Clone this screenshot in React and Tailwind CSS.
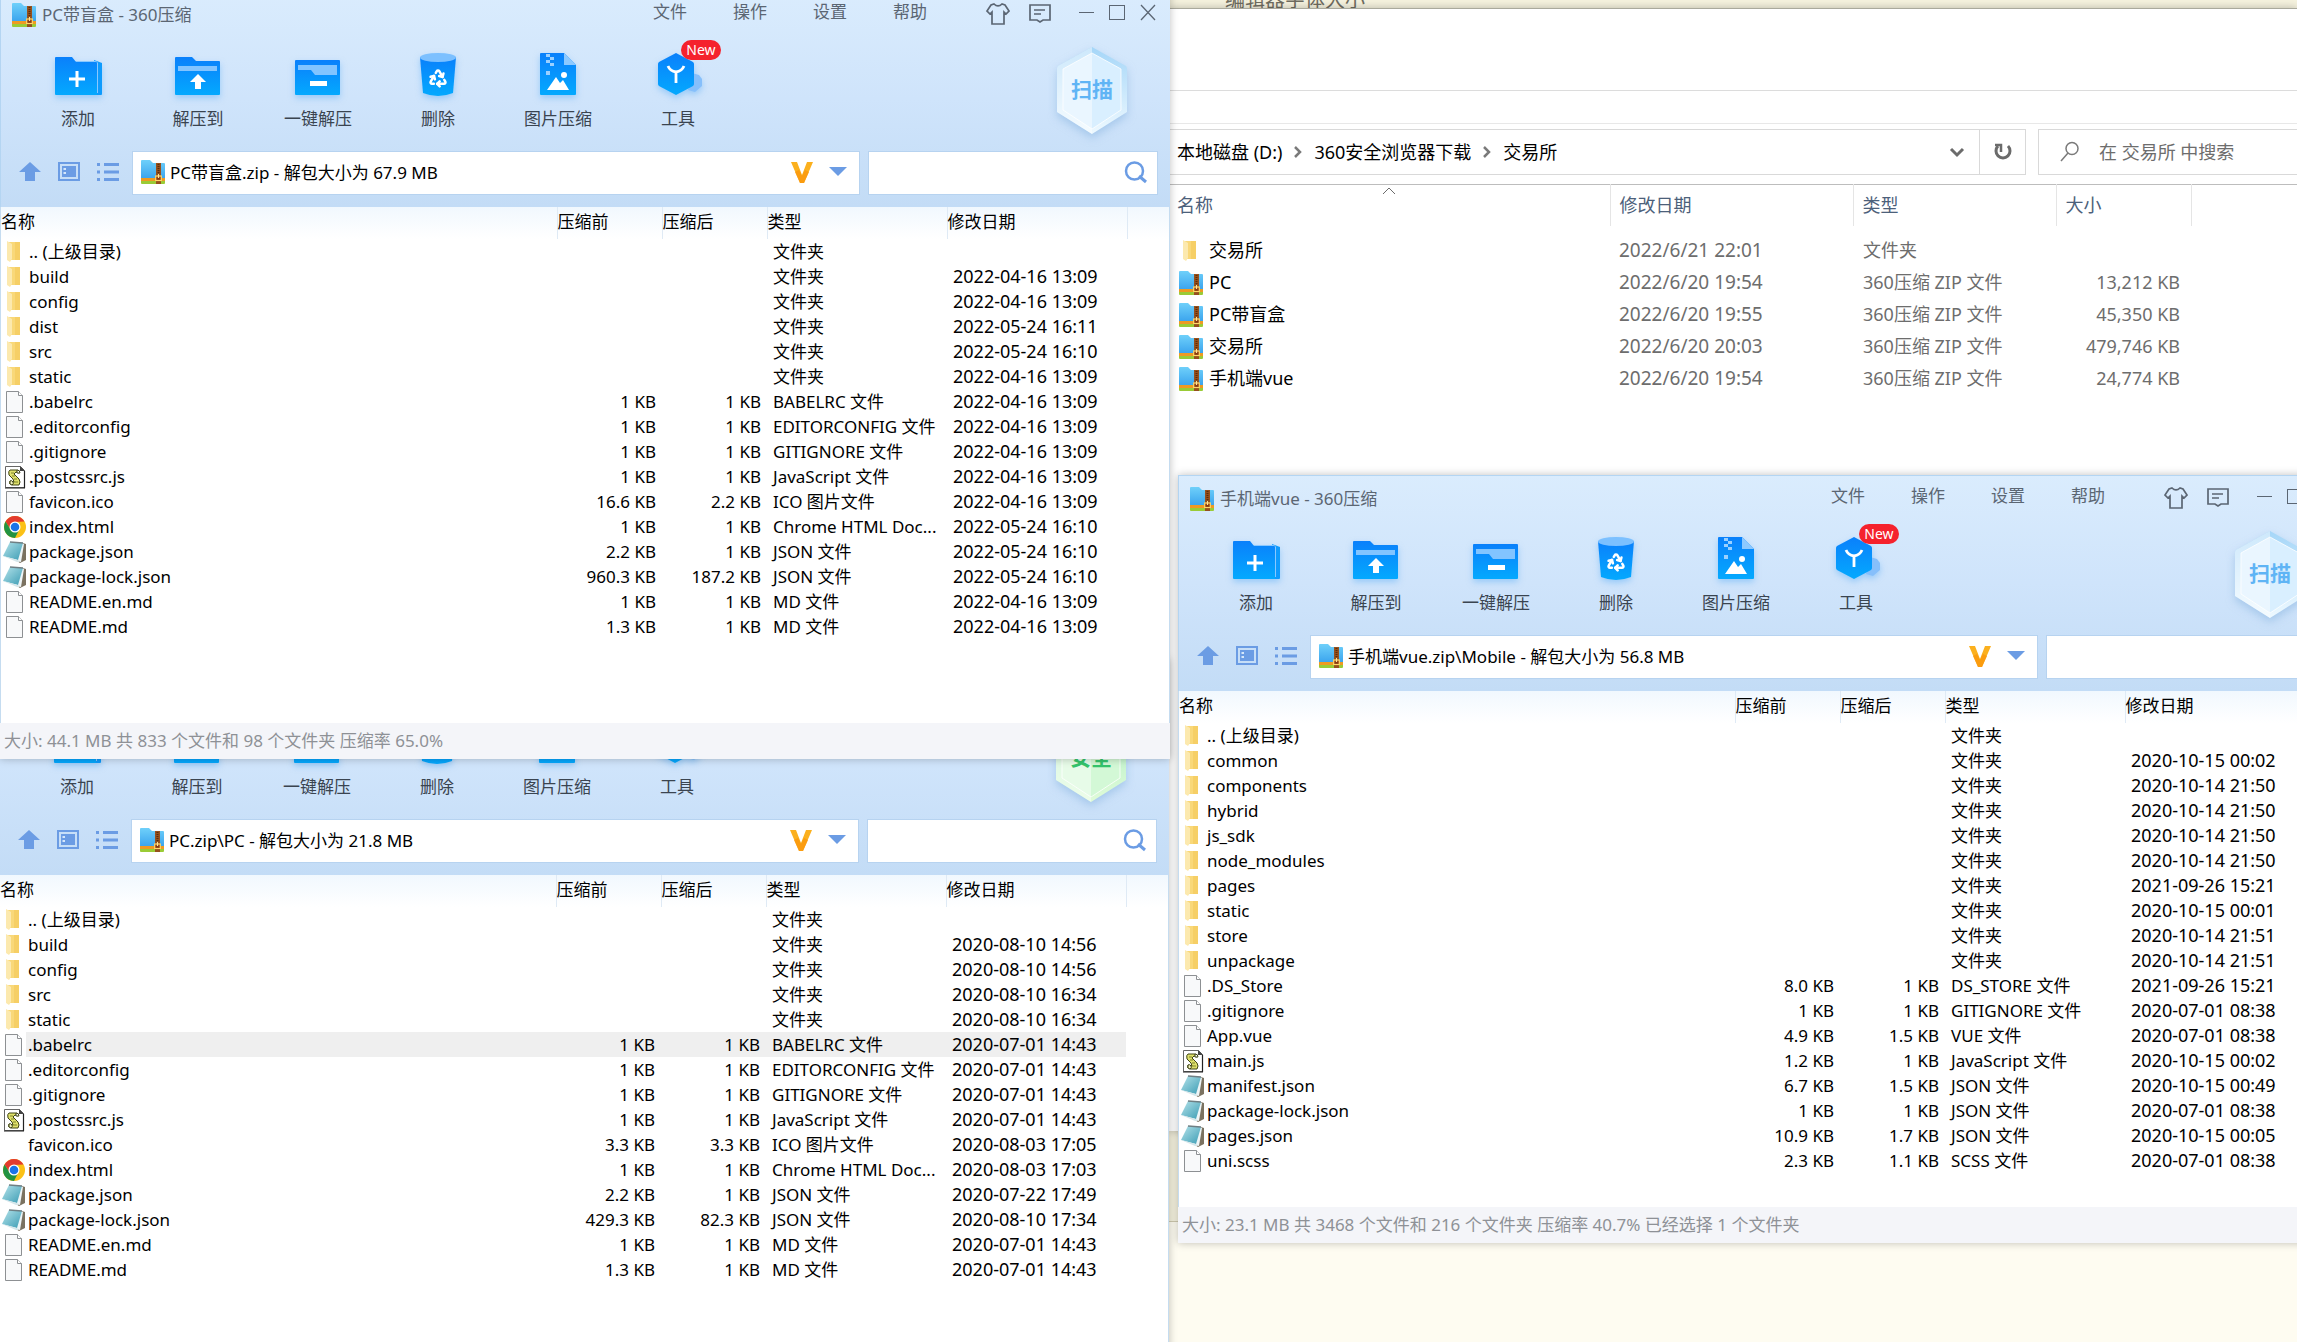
import React from "react";
import { Recycle } from "lucide-react";

/* ---------- small icons ---------- */

function ZipIcon() {
  return (
    <svg viewBox="0 0 24 24" className="size-6 shrink-0" aria-hidden="true">
      <defs>
        <linearGradient id="zipBlue" x1="0" y1="0" x2="0" y2="1">
          <stop offset="0" stopColor="#6fd0fa" />
          <stop offset="1" stopColor="#3ca5ee" />
        </linearGradient>
      </defs>
      <path d="M0 1q0-1 1-1h8l3 3h11q1 0 1 1v14H0z" fill="url(#zipBlue)" />
      <rect x="0" y="18" width="24" height="3" fill="#ee9a22" />
      <path d="M0 21h24v2q0 1-1 1H1q-1 0-1-1z" fill="#9acb36" />
      <rect x="15" y="3" width="5" height="21" fill="#96501c" />
      <path d="M17.500 4v11" stroke="#5a2c0c" strokeWidth="2" strokeDasharray="1 1" />
      <rect x="14.700" y="16" width="5.600" height="4.500" fill="#8a3a10" stroke="#ffd869" strokeWidth="1.200" />
      <path d="M17.500 14v4" stroke="#ffe39a" strokeWidth="1.200" />
    </svg>
  );
}

function FolderIcon() {
  return (
    <svg viewBox="0 0 24 24" className="size-6 shrink-0" aria-hidden="true">
      <path d="M6 2h11v18H6z" fill="#f9d879" />
      <path d="M12 2h5v18h-5z" fill="#f6cf66" />
      <path d="M4 1l5 3v15l-2 3-3-2z" fill="#fce9ae" />
    </svg>
  );
}

function FileIcon() {
  return (
    <svg viewBox="0 0 24 24" className="size-6 shrink-0" aria-hidden="true">
      <path d="M3.500 1.500h12l4 4v17h-16z" fill="#f8f9fa" stroke="#8d9093" />
      <path d="M15.500 1.500v4h4" fill="#fff" stroke="#8d9093" />
    </svg>
  );
}

function ScriptIcon() {
  return (
    <svg viewBox="0 0 24 24" className="size-6 shrink-0" aria-hidden="true">
      <path d="M2.500 1.500h15l4 4v17h-19z" fill="#fff" stroke="#666" />
      <path d="M2 23h20M21.500 6v17" stroke="#222" strokeWidth="1.200" />
      <path d="M17 1v5h5z" fill="#444" />
      <path d="M7 5h7q3 0 2 3l-3-1-2 2 5 5q2 3 0 6H9q-4-1-2-4l4 1-1-3-4-4q-1-4 1-5z" fill="#dfe06a" stroke="#3f4415" />
      <path d="M14 5q3 0 3 3h-3z" fill="#fff" stroke="#3f4415" />
      <path d="M8 8h3M9 11h3M11 14h3M11 17h4" stroke="#7f842c" />
      <path d="M7 16q2-1 3 1t-1 3q-3 0-2-4z" fill="#f4f4c0" stroke="#3f4415" />
    </svg>
  );
}

function ChromeIcon() {
  return (
    <svg viewBox="0 0 24 24" className="size-6 shrink-0" aria-hidden="true">
      <circle cx="12" cy="12" r="11" fill="#fbc116" />
      <path d="M2.500 6.500A11 11 0 0 1 21.500 6.500L12 7 7.700 14.500z" fill="#e33b2e" />
      <path d="M2.500 6.500A11 11 0 0 0 12 23l4.300-8.500-4.300 2.500-4.300-2.500z" fill="#229342" />
      <circle cx="12" cy="12" r="5.500" fill="#fff" />
      <circle cx="12" cy="12" r="4.300" fill="#1a73e8" />
    </svg>
  );
}

function NoteIcon() {
  return (
    <svg viewBox="0 0 24 24" className="size-6 shrink-0" aria-hidden="true">
      <defs>
        <linearGradient id="note" x1="0" y1="0" x2="1" y2="1">
          <stop offset="0" stopColor="#b5e3ea" />
          <stop offset="1" stopColor="#3b9cb4" />
        </linearGradient>
      </defs>
      <path d="M20 3l3 1v16l-6 3-3-2z" fill="#7b7260" />
      <path d="M19 3l2 1-3 18-4-1z" fill="#eef5f7" />
      <path d="M7 2l13 1-5 17L0 16z" fill="url(#note)" />
      <path d="M7 2l13 1" stroke="#6f7f84" strokeWidth="1.500" />
      <path d="M0 16l15 4 2 2-3 0z" fill="#d5e6ea" />
    </svg>
  );
}

const fileIcons = {
  zip: ZipIcon,
  folder: FolderIcon,
  file: FileIcon,
  script: ScriptIcon,
  chrome: ChromeIcon,
  note: NoteIcon,
};

/* ---------- toolbar icons ---------- */

function ToolGradient() {
  return (
    <svg className="absolute size-0" aria-hidden="true">
      <defs>
        <linearGradient id="tool" x1="0" y1="0" x2="0" y2="1">
          <stop offset="0" stopColor="#0a80fb" />
          <stop offset="1" stopColor="#04a9fe" />
        </linearGradient>
      </defs>
    </svg>
  );
}

const toolArt = {
  add: (
    <>
      <path d="M40 11l8 3v31q0 1-1 1h-5z" fill="#0e9bfd" />
      <path d="M21 12h20q2 0 3 2v30h-3V14H20z" fill="#8ac8ff" />
      <path d="M1 9q0-1 1-1h16l4 5h20q1 0 1 1v32H2q-1 0-1-1z" fill="url(#tool)" />
      <path d="M23 22v16M15 30h16" stroke="#fff" strokeWidth="3" />
    </>
  ),
  extract: (
    <>
      <path d="M1 9q0-1 1-1h16l4 4h23q1 0 1 1v32q0 1-1 1H2q-1 0-1-1z" fill="url(#tool)" />
      <path d="M4 17h39v5H4z" fill="#82c4ff" />
      <path d="M24 25l8 8h-5v7h-6v-7h-5z" fill="#fff" />
    </>
  ),
  quick: (
    <>
      <path d="M1 12q0-1 1-1h43q1 0 1 1v33q0 1-1 1H2q-1 0-1-1z" fill="url(#tool)" />
      <path d="M4 16h39v10H21l-4-5H4z" fill="#82c4ff" />
      <path d="M16 32h17v5H16z" fill="#fff" />
    </>
  ),
  remove: (
    <>
      <path d="M6 8h36l-3 36q-15 6-30 0z" fill="url(#tool)" />
      <ellipse cx="24" cy="8.500" rx="18" ry="4.500" fill="#7cc0ff" />
    </>
  ),
  picture: (
    <>
      <path d="M6 5q0-1 1-1h23l12 12v29q0 1-1 1H7q-1 0-1-1z" fill="url(#tool)" />
      <path d="M30 4l12 12H30z" fill="#8cc9ff" />
      <path d="M12 5h4v3h-4zM16 8h4v3h-4zM12 11h4v3h-4zM16 14h4v3h-4zM12 22h4v4h-4z" fill="#9bd0ff" />
      <circle cx="30" cy="26" r="3" fill="#fff" />
      <path d="M13 41l9-13 4 6 3-3 6 10z" fill="#fff" />
    </>
  ),
  tools: (
    <>
      <path d="M38 24l7 2 3 4v7l-7 6-7-2z" fill="#86bffb" />
      <path d="M22 4l17 9q1 1 1 2v20q0 1-1 2l-17 9L5 37q-1-1-1-2V15q0-1 1-2z" fill="url(#tool)" />
      <path d="M14 17q2 5 8 6 6-1 8-6M22 23v11" fill="none" stroke="#fff" strokeWidth="2.800" />
    </>
  ),
};

const tools = [
  ["add", "添加"],
  ["extract", "解压到"],
  ["quick", "一键解压"],
  ["remove", "删除"],
  ["picture", "图片压缩"],
  ["tools", "工具"],
];

function ToolButton({ kind, label }) {
  return (
    <button type="button" className="flex w-[120px] flex-col items-center gap-2.5 pt-2.5">
      <span className="relative block size-12">
        <svg viewBox="0 0 48 48" className="size-12 drop-shadow-[0_3px_3px_#5fb0f580]" aria-hidden="true">
          {toolArt[kind]}
        </svg>
        {kind === "remove" && (
          <Recycle className="absolute top-[19px] left-[14px] size-5 text-white" strokeWidth={3} />
        )}
        {kind === "tools" && (
          <span className="absolute -top-[9px] left-[27px] w-10 rounded-full bg-[#f5222d] text-center text-[14px] leading-5 text-white">
            New
          </span>
        )}
      </span>
      <span className="leading-6 whitespace-nowrap text-[#3a4450]">{label}</span>
    </button>
  );
}

function ShieldBadge({ label, safe }) {
  const id = safe ? "shieldSafe" : "shieldScan";
  return (
    <button type="button" className="relative mt-2 mr-[43px] h-[88px] w-[70px]">
      <svg viewBox="0 0 70 88" className="h-[88px] w-[70px] drop-shadow-[0_4px_4px_#7faedb80]" aria-hidden="true">
        <defs>
          <linearGradient id={id} x1="0" y1="0" x2="0" y2="1">
            <stop offset="0" stopColor={safe ? "#a9ecc4" : "#a5d6f8"} />
            <stop offset="1" stopColor={safe ? "#e0fbd8" : "#eef9ff"} />
          </linearGradient>
        </defs>
        <path d="M35 0l34 19q1 1 1 3v43L35 87 0 65V22q0-2 1-3z" fill={`url(#${id})`} />
        <path d="M35 6l29 16v41L35 82 6 63V22z" fill={safe ? "#d3f8d6" : "#d9efff"} stroke="#fff" strokeOpacity="0.800" />
        <path d="M35 0v87L0 65V22q0-2 1-3z" fill="#fff" fillOpacity="0.450" />
      </svg>
      <span
        className={
          safe
            ? "absolute inset-0 text-center text-[21px] leading-[84px] font-bold text-[#35c46c]"
            : "absolute inset-0 text-center text-[21px] leading-[84px] font-bold text-[#5fb4f5]"
        }
      >
        {label}
      </span>
    </button>
  );
}

/* ---------- archiver window ---------- */

function TitleBar({ title }) {
  return (
    <div className="flex h-12 items-start justify-between">
      <h2 className="flex items-center gap-1.5 pt-3 pl-3 leading-6 text-[#5b6673]">
        <ZipIcon />
        {title}
      </h2>
      <div className="flex items-start pt-[9px] pr-2.5 text-[#5b6673]">
        <nav className="flex leading-6">
          {["文件", "操作", "设置", "帮助"].map((m) => (
            <button key={m} type="button" className="w-20">
              {m}
            </button>
          ))}
        </nav>
        <button type="button" aria-label="皮肤" className="mt-px ml-9 size-6">
          <svg viewBox="0 0 24 24" fill="none" stroke="currentColor" strokeWidth="1.700">
            <path d="M8 3q4 4 8 0l3 1 4 6-3 3-2-2v12H6V11l-2 2-3-3 4-6z" />
          </svg>
        </button>
        <button type="button" aria-label="反馈" className="mt-px ml-[18px] size-6">
          <svg viewBox="0 0 24 24" fill="none" stroke="currentColor" strokeWidth="1.700">
            <path d="M2 4h20v15h-7l-3 2-3-2H2z" />
            <path d="M6 9h11M6 13h7" />
          </svg>
        </button>
        <button type="button" aria-label="最小化" className="ml-[22px] size-6">
          <svg viewBox="0 0 24 24" fill="none" stroke="currentColor">
            <path d="M5 12.500h15" />
          </svg>
        </button>
        <button type="button" aria-label="最大化" className="ml-[7px] size-6">
          <svg viewBox="0 0 24 24" fill="none" stroke="currentColor">
            <rect x="4.500" y="5.500" width="15" height="14" />
          </svg>
        </button>
        <button type="button" aria-label="关闭" className="ml-[7px] size-6">
          <svg viewBox="0 0 24 24" fill="none" stroke="currentColor" strokeWidth="1.300">
            <path d="M5 5l14 15M19 5L5 20" />
          </svg>
        </button>
      </div>
    </div>
  );
}

function AddressRow({ path }) {
  return (
    <div className="flex h-14 items-start pr-3 pb-3 text-[#6b9ce4]">
      <div className="flex h-[42px] w-[132px] shrink-0 items-center gap-[15px] pl-[18px]">
        <button type="button" aria-label="上一级" className="size-6">
          <svg viewBox="0 0 24 24" fill="currentColor">
            <path d="M12 2l11 10h-6v9H7v-9H1z" />
          </svg>
        </button>
        <button type="button" aria-label="视图" className="size-6">
          <svg viewBox="0 0 24 24">
            <rect x="2" y="3" width="20" height="17" fill="none" stroke="currentColor" strokeWidth="2" />
            <path d="M5 6h14v11H5z" fill="currentColor" />
            <path d="M6.500 8h2.500v2h-2.500zM6.500 12h2.500v2h-2.500z" fill="#d5e7fb" />
          </svg>
        </button>
        <button type="button" aria-label="列表" className="size-6">
          <svg viewBox="0 0 24 24" fill="none" stroke="currentColor" strokeWidth="3">
            <path d="M1 4.500h3M1 12h3M1 19.500h3M8 4.500h15M8 12h15M8 19.500h15" />
          </svg>
        </button>
      </div>
      <div className="flex h-11 min-w-0 flex-1 items-center border border-[#b7d3f0] bg-white pr-[9px] pb-0.5 pl-2">
        <ZipIcon />
        <input
          aria-label="压缩包路径"
          defaultValue={path}
          className="h-10 min-w-0 flex-1 bg-transparent pb-0.5 pl-[5px] text-black outline-none"
        />
        <svg viewBox="0 0 24 24" className="size-6" aria-hidden="true">
          <path d="M1 2h6l5 13 5-13h6L14 23h-4z" fill="#fbb01e" />
          <path d="M5 12l5 11h4l5-11-4-2-3 6-3-6z" fill="#fb970b" fillOpacity="0.800" />
        </svg>
        <button type="button" aria-label="历史路径" className="ml-3 size-6">
          <svg viewBox="0 0 24 24" fill="currentColor">
            <path d="M3 7h18l-9 9z" />
          </svg>
        </button>
      </div>
      <div className="ml-2 flex h-11 w-[290px] shrink-0 items-center border border-[#b7d3f0] bg-white pr-[9px] pb-0.5">
        <input type="search" aria-label="搜索" className="h-10 min-w-0 flex-1 bg-transparent px-2 text-black outline-none" />
        <button type="button" aria-label="开始搜索" className="size-6">
          <svg viewBox="0 0 24 24" fill="none" stroke="currentColor" strokeWidth="2.500">
            <circle cx="10.500" cy="11" r="8.500" />
            <path d="M15 16l7 6" strokeWidth="3" />
          </svg>
        </button>
      </div>
    </div>
  );
}

function ArchiveTable({ rows }) {
  return (
    <table className="w-full table-fixed border-collapse text-black">
      <colgroup>
        <col />
        <col className="w-[105px]" />
        <col className="w-[105px]" />
        <col className="w-[180px]" />
        <col className="w-[180px]" />
        <col className="w-[42px]" />
      </colgroup>
      <thead>
        <tr className="h-8 bg-linear-to-b from-[#f1f8fe] to-white text-left leading-6">
          <th className="p-0 pb-0.5 font-normal">名称</th>
          {["压缩前", "压缩后", "类型", "修改日期"].map((h) => (
            <th key={h} className="border-l border-[#dfeaf5] p-0 pb-0.5 font-normal">
              {h}
            </th>
          ))}
          <th className="border-l border-[#dfeaf5] p-0" aria-label="空白列" />
        </tr>
      </thead>
      <tbody>
        {rows.map(([icon, name, before, after, type, date, active]) => {
          const Icon = fileIcons[icon];
          const fill = active ? "bg-[#efefef]" : "";
          return (
            <tr key={name} className="h-[25px] leading-[25px] whitespace-nowrap">
              <td className="p-0">
                <div className="flex h-[25px] items-center">
                  <span className="flex w-[26px] shrink-0 justify-end">{Icon && <Icon />}</span>
                  <span className={`h-[25px] flex-1 pl-0.5 ${fill}`}>{name}</span>
                </div>
              </td>
              <td className={`p-0 pr-1.5 text-right ${fill}`}>{before}</td>
              <td className={`p-0 pr-1.5 text-right ${fill}`}>{after}</td>
              <td className={`p-0 pl-1.5 ${fill}`}>{type}</td>
              <td className={`p-0 pl-1.5 text-[18px] ${fill}`}>{date}</td>
              <td className="p-0" />
            </tr>
          );
        })}
      </tbody>
    </table>
  );
}

function ArchiveWindow({ title, path, rows, status, safe, className }) {
  return (
    <section
      aria-label={title}
      className={`absolute flex h-[768px] w-[1170px] flex-col bg-white text-[17px] shadow-[0_0_8px_#00000040] ${className}`}
    >
      <header className="bg-linear-to-b from-[#daecfd] via-[#cfe4fb] to-[#c3dcf6] shadow-[inset_1px_1px_0_#b4d5f2]">
        <TitleBar title={title} />
        <div className="flex h-28 items-start justify-between pl-[18px]">
          <div className="flex">
            {tools.map(([kind, label]) => (
              <ToolButton key={kind} kind={kind} label={label} />
            ))}
          </div>
          <ShieldBadge label={safe ? "安全" : "扫描"} safe={safe} />
        </div>
        <AddressRow path={path} />
      </header>
      <div className="flex-1 border-x border-[#c5dcf0]">
        <ArchiveTable rows={rows} />
      </div>
      {status && (
        <footer className="h-9 bg-[#f4f5f9] pl-1 leading-9 text-[#8e9196]">{status}</footer>
      )}
    </section>
  );
}

/* ---------- data ---------- */

const dir = (name, date) => ["folder", name, "", "", "文件夹", date];

const boxRows = [
  dir(".. (上级目录)", ""),
  dir("build", "2022-04-16 13:09"),
  dir("config", "2022-04-16 13:09"),
  dir("dist", "2022-05-24 16:11"),
  dir("src", "2022-05-24 16:10"),
  dir("static", "2022-04-16 13:09"),
  ["file", ".babelrc", "1 KB", "1 KB", "BABELRC 文件", "2022-04-16 13:09"],
  ["file", ".editorconfig", "1 KB", "1 KB", "EDITORCONFIG 文件", "2022-04-16 13:09"],
  ["file", ".gitignore", "1 KB", "1 KB", "GITIGNORE 文件", "2022-04-16 13:09"],
  ["script", ".postcssrc.js", "1 KB", "1 KB", "JavaScript 文件", "2022-04-16 13:09"],
  ["file", "favicon.ico", "16.6 KB", "2.2 KB", "ICO 图片文件", "2022-04-16 13:09"],
  ["chrome", "index.html", "1 KB", "1 KB", "Chrome HTML Doc...", "2022-05-24 16:10"],
  ["note", "package.json", "2.2 KB", "1 KB", "JSON 文件", "2022-05-24 16:10"],
  ["note", "package-lock.json", "960.3 KB", "187.2 KB", "JSON 文件", "2022-05-24 16:10"],
  ["file", "README.en.md", "1 KB", "1 KB", "MD 文件", "2022-04-16 13:09"],
  ["file", "README.md", "1.3 KB", "1 KB", "MD 文件", "2022-04-16 13:09"],
];

const pcRows = [
  dir(".. (上级目录)", ""),
  dir("build", "2020-08-10 14:56"),
  dir("config", "2020-08-10 14:56"),
  dir("src", "2020-08-10 16:34"),
  dir("static", "2020-08-10 16:34"),
  ["file", ".babelrc", "1 KB", "1 KB", "BABELRC 文件", "2020-07-01 14:43", true],
  ["file", ".editorconfig", "1 KB", "1 KB", "EDITORCONFIG 文件", "2020-07-01 14:43"],
  ["file", ".gitignore", "1 KB", "1 KB", "GITIGNORE 文件", "2020-07-01 14:43"],
  ["script", ".postcssrc.js", "1 KB", "1 KB", "JavaScript 文件", "2020-07-01 14:43"],
  ["none", "favicon.ico", "3.3 KB", "3.3 KB", "ICO 图片文件", "2020-08-03 17:05"],
  ["chrome", "index.html", "1 KB", "1 KB", "Chrome HTML Doc...", "2020-08-03 17:03"],
  ["note", "package.json", "2.2 KB", "1 KB", "JSON 文件", "2020-07-22 17:49"],
  ["note", "package-lock.json", "429.3 KB", "82.3 KB", "JSON 文件", "2020-08-10 17:34"],
  ["file", "README.en.md", "1 KB", "1 KB", "MD 文件", "2020-07-01 14:43"],
  ["file", "README.md", "1.3 KB", "1 KB", "MD 文件", "2020-07-01 14:43"],
];

const mobileRows = [
  dir(".. (上级目录)", ""),
  dir("common", "2020-10-15 00:02"),
  dir("components", "2020-10-14 21:50"),
  dir("hybrid", "2020-10-14 21:50"),
  dir("js_sdk", "2020-10-14 21:50"),
  dir("node_modules", "2020-10-14 21:50"),
  dir("pages", "2021-09-26 15:21"),
  dir("static", "2020-10-15 00:01"),
  dir("store", "2020-10-14 21:51"),
  dir("unpackage", "2020-10-14 21:51"),
  ["file", ".DS_Store", "8.0 KB", "1 KB", "DS_STORE 文件", "2021-09-26 15:21"],
  ["file", ".gitignore", "1 KB", "1 KB", "GITIGNORE 文件", "2020-07-01 08:38"],
  ["file", "App.vue", "4.9 KB", "1.5 KB", "VUE 文件", "2020-07-01 08:38"],
  ["script", "main.js", "1.2 KB", "1 KB", "JavaScript 文件", "2020-10-15 00:02"],
  ["note", "manifest.json", "6.7 KB", "1.5 KB", "JSON 文件", "2020-10-15 00:49"],
  ["note", "package-lock.json", "1 KB", "1 KB", "JSON 文件", "2020-07-01 08:38"],
  ["note", "pages.json", "10.9 KB", "1.7 KB", "JSON 文件", "2020-10-15 00:05"],
  ["file", "uni.scss", "2.3 KB", "1.1 KB", "SCSS 文件", "2020-07-01 08:38"],
];

const explorerRows = [
  ["folder", "交易所", "2022/6/21 22:01", "文件夹", ""],
  ["zip", "PC", "2022/6/20 19:54", "360压缩 ZIP 文件", "13,212 KB"],
  ["zip", "PC带盲盒", "2022/6/20 19:55", "360压缩 ZIP 文件", "45,350 KB"],
  ["zip", "交易所", "2022/6/20 20:03", "360压缩 ZIP 文件", "479,746 KB"],
  ["zip", "手机端vue", "2022/6/20 19:54", "360压缩 ZIP 文件", "24,774 KB"],
];

/* ---------- file explorer ---------- */

function Crumb({ children, last }) {
  return (
    <>
      <a href="#path" className="text-black">
        {children}
      </a>
      {!last && (
        <svg viewBox="0 0 32 24" className="h-6 w-8" fill="none" stroke="#7a7a7a" strokeWidth="2.500" aria-hidden="true">
          <path d="M13 7l5 5-5 5" />
        </svg>
      )}
    </>
  );
}

function Explorer() {
  return (
    <section
      aria-label="文件资源管理器"
      className="absolute top-2 right-0 left-[1168px] flex h-[1123px] flex-col border-t border-[#a9a99c] bg-white text-[18px] shadow-[0_0_8px_#00000040]"
    >
      <div className="h-[82px] border-b border-[#dcdcdc]" />
      <div className="h-[33px] border-b border-[#e8e8e8]" />
      <div className="mt-[5px] flex h-[46px] gap-3">
        <div className="flex flex-1 items-center border border-[#d9d9d9]">
          <nav aria-label="路径" className="flex flex-1 items-center pl-2">
            <Crumb>本地磁盘 (D:)</Crumb>
            <Crumb>360安全浏览器下载</Crumb>
            <Crumb last>交易所</Crumb>
          </nav>
          <button type="button" aria-label="展开" className="mr-[10px] size-6">
            <svg viewBox="0 0 24 24" fill="none" stroke="#6b6b6b" strokeWidth="3">
              <path d="M6 9l6 6 6-6" />
            </svg>
          </button>
          <button type="button" aria-label="刷新" className="flex h-full w-[46px] items-center justify-center border-l border-[#d9d9d9]">
            <svg viewBox="0 0 24 24" className="size-6" fill="none" stroke="#6b6b6b" strokeWidth="3">
              <path d="M17 6a7 7 0 1 1-10 0" />
              <path d="M4 5h6v7" strokeWidth="2.500" />
            </svg>
          </button>
        </div>
        <label className="flex w-[259px] shrink-0 items-center border-y border-l border-[#d9d9d9] pl-5">
          <svg viewBox="0 0 24 24" className="size-6" fill="none" stroke="#7a7a7a" strokeWidth="1.500" aria-hidden="true">
            <circle cx="13" cy="8.500" r="6" />
            <path d="M9 13l-7 8" />
          </svg>
          <input
            type="search"
            aria-label="搜索文件"
            placeholder="在 交易所 中搜索"
            className="min-w-0 flex-1 bg-transparent pl-4 outline-none placeholder:text-[#6d6d6d]"
          />
        </label>
      </div>
      <table className="mt-[9px] w-full table-fixed border-collapse text-[#6d6d6d]">
        <colgroup>
          <col />
          <col className="w-[243px]" />
          <col className="w-[203px]" />
          <col className="w-[135px]" />
          <col className="w-[106px]" />
        </colgroup>
        <thead>
          <tr className="h-[41px] border-t border-[#bdbdbd] text-left text-[#4c607a]">
            <th className="p-0 px-[9px] font-normal">
              <span className="relative block">
                名称
                <svg viewBox="0 0 14 8" className="absolute inset-x-0 -top-[5px] mx-auto h-2 w-3.5" fill="none" stroke="#6b6b6b" aria-hidden="true">
                  <path d="M1 7l6-6 6 6" />
                </svg>
              </span>
            </th>
            {["修改日期", "类型", "大小"].map((h) => (
              <th key={h} className="border-l border-[#e5e5e5] p-0 pl-[9px] font-normal">
                {h}
              </th>
            ))}
            <th className="border-l border-[#e5e5e5] p-0" aria-label="空白列" />
          </tr>
          <tr className="h-[9px]" />
        </thead>
        <tbody>
          {explorerRows.map(([icon, name, date, type, size]) => {
            const Icon = fileIcons[icon];
            return (
              <tr key={icon + name} className="h-8 whitespace-nowrap">
                <td className="p-0 text-black">
                  <span className="flex items-center gap-1.5 pl-[11px]">
                    <Icon />
                    {name}
                  </span>
                </td>
                <td className="p-0 pl-[9px] text-[19px]">{date}</td>
                <td className="p-0 pl-2.5">{type}</td>
                <td className="p-0 pr-[11px] text-right">{size}</td>
                <td className="p-0" />
              </tr>
            );
          })}
        </tbody>
      </table>
    </section>
  );
}

export default function App() {
  return (
    <main className="relative min-h-screen overflow-hidden bg-[#fefcf1] [font-family:'Noto_Sans','Noto_Sans_CJK_SC',sans-serif]">
      <ToolGradient />
      <div className="h-[1232px] border-b border-[#cfcab0] bg-[#f5f2de] pl-[1225px] text-[20px] leading-5 text-[#6f6c60]">
        <span className="-mt-2.5 block">编辑器字体大小</span>
      </div>
      <Explorer />
      <ArchiveWindow
        className="top-[475px] left-[1178px]"
        title="手机端vue - 360压缩"
        path="手机端vue.zip\Mobile - 解包大小为 56.8 MB"
        rows={mobileRows}
        status="大小: 23.1 MB 共 3468 个文件和 216 个文件夹 压缩率 40.7% 已经选择 1 个文件夹"
      />
      <ArchiveWindow
        className="top-[659px] -left-px"
        title="PC - 360压缩"
        path="PC.zip\PC - 解包大小为 21.8 MB"
        rows={pcRows}
        safe
      />
      <ArchiveWindow
        className="-top-[9px] left-0"
        title="PC带盲盒 - 360压缩"
        path="PC带盲盒.zip - 解包大小为 67.9 MB"
        rows={boxRows}
        status="大小: 44.1 MB 共 833 个文件和 98 个文件夹 压缩率 65.0%"
      />
    </main>
  );
}
